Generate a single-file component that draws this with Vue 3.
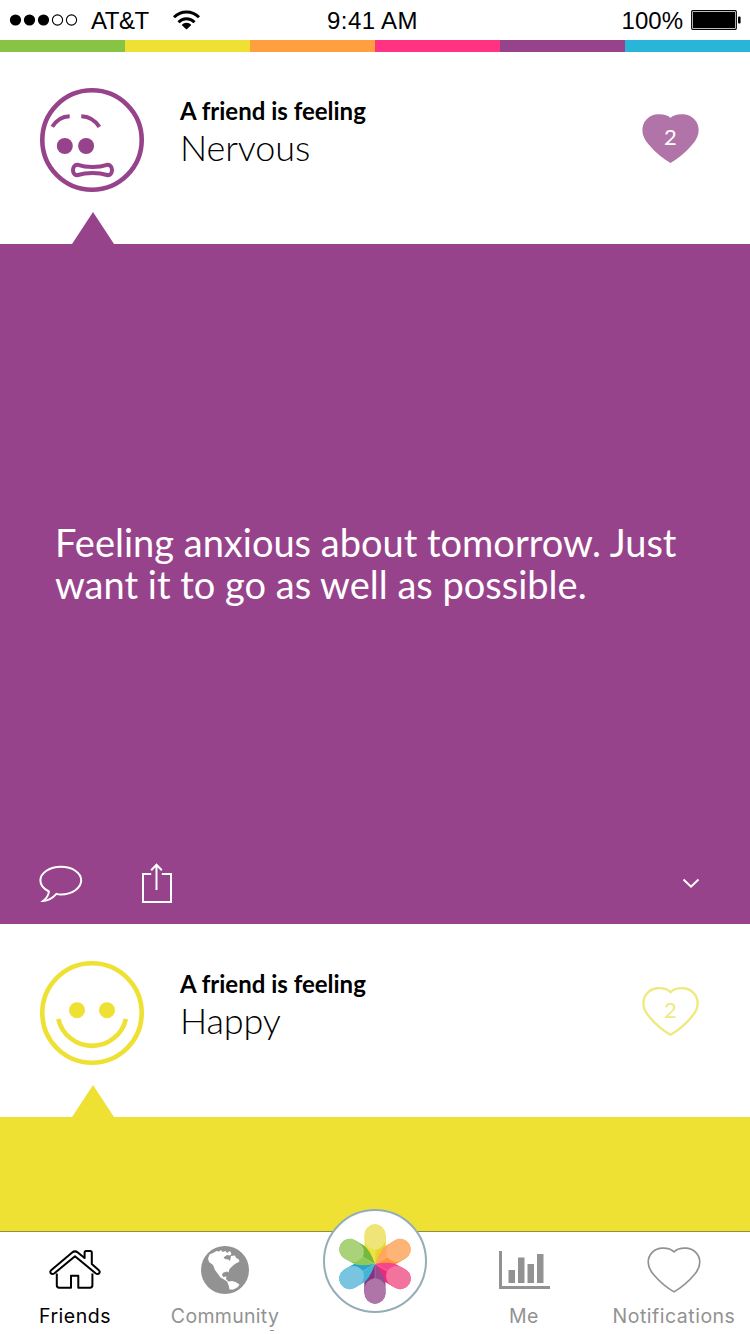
<template>
  <div class="phone">
    <header class="status-bar">
      <div class="carrier">
        <svg class="signal" width="68" height="12" viewBox="0 0 68 12">
          <circle v-for="n in 5" :key="n" :cx="n * 14 - 8.5" cy="6" :r="n > 3 ? 5.1 : 5.6" :class="{empty: n > 3}" />
        </svg>
        <span class="network">AT&amp;T</span>
        <svg class="wifi" width="27" height="19" viewBox="0 0 27 19">
          <path d="M1 6.2C8-0.8 19-0.8 26 6.2" />
          <path d="M5.5 11.2C10 6.7 17 6.7 21.5 11.2" />
          <path class="fill" d="M8.7 13.9C11.5 11.1 15.5 11.1 18.3 13.9L13.5 18.5z" />
        </svg>
      </div>
      <span class="time">9:41 AM</span>
      <div class="power">
        <span>100%</span>
        <svg width="50" height="20" viewBox="0 0 50 20">
          <rect class="case" x="0.7" y="0.7" width="44.6" height="18.6" rx="1" />
          <rect x="2" y="2" width="42" height="16" />
          <rect x="47" y="6.5" width="2.6" height="7" rx="1" />
        </svg>
      </div>
    </header>

    <div class="stripes">
      <i v-for="color in stripes" :key="color" :style="{background: color}"></i>
    </div>

    <main class="feed">
      <article v-for="post in posts" :key="post.mood" class="post" :class="post.theme">
        <div class="post-head">
          <svg class="face" width="104" height="104" viewBox="0 0 104 104">
            <circle class="line" cx="52" cy="52" r="49.7" />
            <g v-if="post.theme === 'nervous'">
              <path class="line brow" d="M12.3 38.8Q18.5 28.5 29.7 28.2M41.3 28.2Q52.5 28.5 59.4 38.8" />
              <circle cx="24.8" cy="58" r="8" />
              <circle cx="46.1" cy="58" r="8" />
              <path class="line brow" d="M38 76.8C46 79.6 59 79.6 67 76.8C73.7 75.8 73.7 88.5 67 87C59 84.4 46 84.4 38 87C31.3 88.5 31.3 75.8 38 76.8z" />
            </g>
            <g v-else>
              <circle cx="37" cy="49.2" r="8" />
              <circle cx="67" cy="49.2" r="8" />
              <path class="line" d="M18.3 58A34.7 34.7 0 0 0 85.9 58" />
            </g>
          </svg>
          <div class="feeling">
            <strong>A friend is feeling</strong>
            <span>{{ post.mood }}</span>
          </div>
          <div class="likes">
            <svg width="57" height="49" viewBox="0 0 58 50">
              <path :d="heart" />
            </svg>
            <span>{{ post.likes }}</span>
          </div>
          <i class="pointer"></i>
        </div>
        <div class="post-body">
          <p v-if="post.text">{{ post.text }}</p>
          <div v-if="post.text" class="actions">
            <svg class="comment" width="44" height="38" viewBox="0 0 44 38">
              <path d="M9.9 26.5C4.5 23.8 1.4 19.8 1.4 15.5C1.4 7.8 10.6 1.8 22 1.8C33.3 1.8 42.2 7.8 42.2 15.3C42.2 22.8 33.3 29.5 22 29.5Q19.8 29.6 17.4 28.9C14.2 32.5 9.7 35.7 4.3 35.9C7.8 33.2 9.5 30.1 9.9 26.5z" />
            </svg>
            <svg class="share" width="32" height="41" viewBox="0 0 32 41">
              <path d="M10.2 11H2V39H30V11H20.8M15.5 27V1.8M10.2 7.2L15.5 1.8L20.8 7.2" />
            </svg>
            <svg class="more" width="18" height="12" viewBox="0 0 18 12">
              <path d="M1.5 1.5L9 8.7L16.5 1.5" />
            </svg>
          </div>
        </div>
      </article>
    </main>

    <nav class="tab-bar">
      <div class="tab friends" :class="{active: tab === 'friends'}" @click="tab = 'friends'">
        <svg width="54" height="48" viewBox="0 0 54 48">
          <path d="M8.8 27.5V39.3Q8.8 41.7 11.2 41.7H23V29.7H30.3V41.7H42Q44.4 41.7 44.4 39.3V27.5" />
          <path d="M27 10.2L6.5 27.2C3.5 29.3 0.7 26.3 3.4 23.9L24.2 6.5Q27 4.2 29.8 6.5L36.6 12V6.5Q36.6 5 38.1 5H42.2Q43.8 5 43.8 6.5V18L50.6 23.9C53.3 26.3 50.5 29.3 47.5 27.2L27 10.2z" />
        </svg>
        <span>Friends</span>
      </div>
      <div class="tab community" :class="{active: tab === 'community'}" @click="tab = 'community'">
        <svg width="48" height="48" viewBox="0 0 48 48">
          <circle cx="24" cy="24" r="24" />
          <path class="land" d="M8.5 8.5L13 6.5L15.5 5L18 5.5L20 4L21.5 6L24.5 5L26 7L29 5L30.5 8L29 9.5L26 9L22.5 11.5L24 13L27.5 13.5L29 15L30 10L34 9.5L35 12L37.5 13L38.5 15.5L34 18L31 20.5L28.5 23L27.5 26.5L26 25.5L22.5 26.5L21 28.5L22 31L25.5 30.5L25 33L27.5 35.5L31 35L34.5 36L38.5 38.5L37 41L32.5 43.5L28.5 43.5L27.5 39L26 35.5L23 33.5L19.5 31.5L17 28L14 24L12 19L8 16L7 12.5z" />
        </svg>
        <span>Community</span>
        <i class="tick"></i>
      </div>
      <div class="tab mood">
        <div class="mood-btn">
          <svg width="100" height="100" viewBox="-50 -53 100 100">
            <g v-for="(petal, i) in petals" :key="i" :transform="`rotate(${i * 60})`">
              <path :fill="petal.base" d="M-10.5 -29.2A10.5 10.5 0 0 1 10.5 -29.2V-19Q10 -12 0 0Q-10 -12 -10.5 -19z" />
              <path :fill="petal.shade" d="M10.5 -29V-19Q10 -12 0 0V-14Q8 -18 10.5 -29z" />
              <path :fill="petal.light" d="M-10.5 -29.2A10.5 10.5 0 0 1 10.5 -29.2V-25Q10 -16 0 -14Q-10 -16 -10.5 -25z" />
              <path class="seam" d="M0 0V-14" />
            </g>
          </svg>
        </div>
      </div>
      <div class="tab me" :class="{active: tab === 'me'}" @click="tab = 'me'">
        <svg width="51" height="48" viewBox="0 0 51 48">
          <path d="M0 5H3V40H51V43H0zM9.5 24H16V37H9.5zM19 11.5H25.5V37H19zM28.5 18H35V37H28.5zM38 8H44.5V37H38z" />
        </svg>
        <span>Me</span>
      </div>
      <div class="tab notifications" :class="{active: tab === 'notifications'}" @click="tab = 'notifications'">
        <svg width="54" height="46" viewBox="0 0 58 50" preserveAspectRatio="none">
          <path :d="heart" />
        </svg>
        <span>Notifications</span>
      </div>
    </nav>
  </div>
</template>

<script setup>
import {ref} from "vue";

const tab = ref('friends')

const stripes = ['#87c444', '#eee133', '#ff9f40', '#ff3382', '#97438b', '#29b5d8']

const heart = 'M29 5.2C24.5 0.8 19.5 1 15.5 1.3C7.5 2 1.3 8.5 1.3 16.5C1.3 22 3.5 26 7.5 30.5C12.5 36.5 20 43.5 29 48.8C38 43.5 45.5 36.5 50.5 30.5C54.5 26 56.7 22 56.7 16.5C56.7 8.5 50.5 2 42.5 1.3C38.5 1 33.5 0.8 29 5.2z'

const posts = [
  {
    theme: 'nervous',
    mood: 'Nervous',
    likes: 2,
    text: 'Feeling anxious about tomorrow. Just want it to go as well as possible.',
  },
  {
    theme: 'happy',
    mood: 'Happy',
    likes: 2,
    text: '',
  },
]

const petals = [
  {base: '#eee13f', shade: '#e6d727', light: '#efe478'},
  {base: '#ffa75d', shade: '#ff963c', light: '#fcb477'},
  {base: '#f7478c', shade: '#ed2b7a', light: '#f3739f'},
  {base: '#984a91', shade: '#83347e', light: '#b075a8'},
  {base: '#42b5d6', shade: '#2aa5ca', light: '#79c5df'},
  {base: '#8fc95a', shade: '#74b93b', light: '#a9d27a'},
]
</script>

<style scoped>
.phone{
  display: flex;
  flex-direction: column;
  width: 750px;
  height: 1334px;
  overflow: hidden;
  background: #fff;
  color: #000;
  font-family: Lato, sans-serif;
}
svg{
  display: block;
  flex: none;
  overflow: visible;
}
.status-bar{
  display: grid;
  grid-template-columns: 1fr auto 1fr;
  align-items: center;
  height: 40px;
  padding: 0 10px;
  font-family: "Liberation Sans", Arial, sans-serif;
  font-size: 24px;
  line-height: 38px;
}
.status-bar span{
  padding-top: 2px;
}
.carrier, .power{
  display: flex;
  align-items: center;
}
.signal .empty{
  fill: none;
  stroke: #000;
  stroke-width: 1.1;
}
.network{
  margin-left: 13px;
  letter-spacing: -0.5px;
}
.wifi{
  margin-left: 24px;
}
.wifi path{
  fill: none;
  stroke: #000;
  stroke-width: 3;
}
.wifi .fill{
  fill: #000;
  stroke: none;
}
.time{
  letter-spacing: 0.4px;
  margin-left: -5px;
}
.power{
  justify-content: flex-end;
  gap: 8px;
  margin-right: -1px;
}
.power .case{
  fill: none;
  stroke: #000;
  stroke-width: 1.2;
}
.stripes{
  display: flex;
  flex: none;
  height: 12px;
}
.stripes i{
  flex: 1;
}
.feed{
  height: 1179px;
  overflow: hidden;
}
.nervous{
  --mood: #97438b;
  --soft: #b174a9;
}
.happy{
  --mood: #eee133;
  --soft: #eeea80;
}
.post-head{
  position: relative;
  display: flex;
  align-items: flex-start;
  box-sizing: border-box;
  height: 192px;
  padding: 36px 51px 0 40px;
}
.happy .post-head{
  height: 193px;
  padding-top: 37px;
}
.face{
  fill: var(--mood);
}
.face .line{
  fill: none;
  stroke: var(--mood);
  stroke-width: 4.6;
}
.face .brow{
  stroke-width: 4;
}
.feeling{
  flex: 1;
  margin: 8px 0 0 36px;
}
.feeling strong, .feeling span{
  display: block;
}
.feeling strong{
  font-size: 24px;
  line-height: 30px;
}
.feeling span{
  margin-top: -1px;
  font-size: 36px;
  font-weight: 300;
  line-height: 44px;
  letter-spacing: -0.1px;
}
.likes{
  display: grid;
  margin-top: 26px;
  color: #fff;
  font-size: 22px;
}
.likes svg, .likes span{
  grid-area: 1 / 1;
}
.likes span{
  line-height: 46px;
  text-align: center;
}
.likes path{
  fill: var(--soft);
  stroke: var(--soft);
  stroke-width: 2;
}
.happy .likes{
  color: var(--soft);
}
.happy .likes path{
  fill: none;
  stroke-width: 2.4;
}
.pointer{
  position: absolute;
  left: 72px;
  bottom: 0;
  width: 42px;
  height: 32px;
  background: var(--mood);
  clip-path: polygon(50% 0, 100% 100%, 0 100%);
}
.post-body{
  display: flex;
  flex-direction: column;
  box-sizing: border-box;
  height: 680px;
  padding: 277px 50px 0 55px;
  background: var(--mood);
  color: #fff;
}
.post-body p{
  margin: 0;
  font-size: 38px;
  line-height: 42px;
}
.actions{
  display: flex;
  align-items: center;
  margin: auto 0 20px -16px;
}
.actions path{
  fill: none;
  stroke: #fff;
  stroke-width: 2;
}
.share{
  margin-left: 58px;
}
.more{
  margin-left: auto;
}
.tab-bar{
  position: relative;
  display: grid;
  grid-template-columns: repeat(5, 150px);
  box-sizing: border-box;
  height: 103px;
  border-top: 1px solid #918d42;
  background: #fff;
}
.tab{
  display: flex;
  flex-direction: column;
  align-items: center;
  box-sizing: border-box;
  padding: 14px 2px 0 0;
  color: #929292;
  font-family: Inter, "Liberation Sans", sans-serif;
  font-size: 19.5px;
  line-height: 24px;
  letter-spacing: 0.5px;
}
.tab svg{
  fill: currentColor;
}
.tab span{
  margin-top: 10px;
}
.tab.friends, .tab.community{
  padding-right: 0;
}
.active{
  color: #000;
}
.community{
  letter-spacing: 0.3px;
}
.friends path{
  fill: #fff;
  stroke: currentColor;
  stroke-width: 2;
  stroke-linejoin: round;
}
.community .land{
  fill: #fff;
}
.tick{
  width: 4px;
  height: 1px;
  margin: 2px 0 0 94px;
  background: #929292;
}
.tab.mood{
  padding: 0;
}
.mood-btn{
  position: absolute;
  top: -23px;
  width: 100px;
  height: 100px;
  border: 2px solid #94aeb7;
  border-radius: 50%;
  background: #fff;
}
.seam{
  stroke: #fff;
  stroke-opacity: 0.3;
  stroke-width: 0.6;
}
.notifications svg{
  margin: 1px 0;
}
.notifications path{
  fill: none;
  stroke: currentColor;
  stroke-width: 1.8;
}
</style>

<style>
body{
  margin: 0;
}
</style>
